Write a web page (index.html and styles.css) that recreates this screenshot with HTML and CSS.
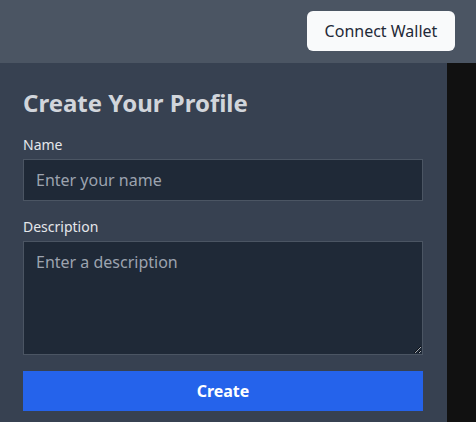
FILE: index.html
```html
<!DOCTYPE html>
<html>
<head>
<meta charset="utf-8">
<link rel="stylesheet" href="styles.css">
</head>
<body>
<header class="topbar">
  <button class="connect">Connect Wallet</button>
</header>
<div class="layout">
  <main class="panel">
    <h2 class="title">Create Your Profile</h2>
    <label class="label" for="name">Name</label>
    <input class="field" id="name" type="text" placeholder="Enter your name">
    <label class="label" for="desc">Description</label>
    <textarea class="field area" id="desc" rows="4" placeholder="Enter a description"></textarea>
    <button class="create">Create</button>
  </main>
  <div class="side"></div>
</div>
</body>
</html>
```
FILE: styles.css
```css
* { box-sizing: border-box; }
html, body { margin: 0; padding: 0; height: 100%; }
body {
  font-family: "Noto Sans", "Open Sans", sans-serif;
  background: #111111;
  overflow: hidden;
}
.topbar {
  height: 63px;
  background: #4b5563;
  display: flex;
  align-items: center;
  justify-content: flex-end;
  padding: 0 21px 1px 0;
}
.connect {
  width: 148px;
  height: 40px;
  padding: 0;
  background: #f9fafb;
  color: #1f2937;
  border: none;
  border-radius: 6px;
  font-family: inherit;
  font-size: 16px;
}
.layout {
  display: flex;
  height: calc(100% - 63px);
}
.panel {
  width: 447px;
  background: #374151;
  padding: 24px 24px 0 23px;
  display: flex;
  flex-direction: column;
}
.side { flex: 1; background: #111111; }
.title {
  margin: 0 0 16px;
  font-size: 24px;
  line-height: 32px;
  font-weight: 700;
  color: #d1d5db;
}
.label {
  display: block;
  font-size: 14px;
  line-height: 20px;
  color: #e5e7eb;
  margin-bottom: 4px;
}
.field {
  display: block;
  width: 400px;
  height: 42px;
  padding: 8px 12px;
  background: #1f2937;
  border: 1px solid #4b5563;
  color: #e5e7eb;
  font-family: inherit;
  font-size: 16px;
  line-height: 24px;
  margin: 0 0 16px;
  outline: none;
}
.field::placeholder { color: #9ca3af; }
.area { height: 114px; resize: vertical; }
.create {
  width: 400px;
  height: 40px;
  background: #2563eb;
  color: #ffffff;
  border: none;
  font-family: inherit;
  font-size: 16px;
  font-weight: 700;
}
```
